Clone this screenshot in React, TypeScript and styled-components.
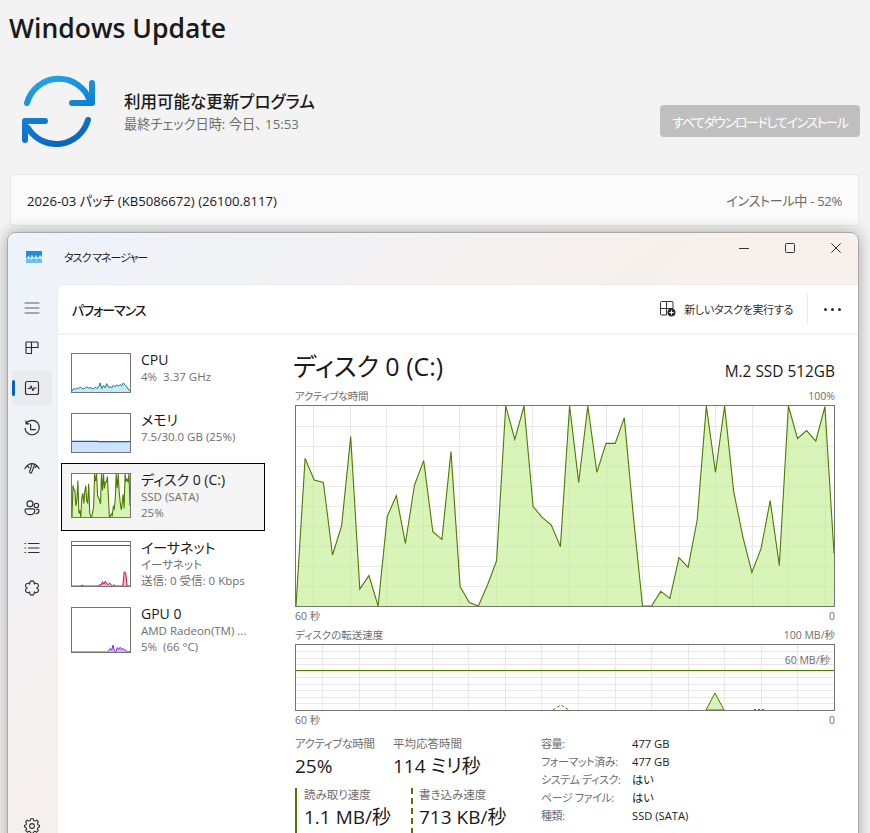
import styled, { createGlobalStyle } from "styled-components";

const FONT = `"Open Sans", "Noto Sans CJK JP", sans-serif`;
const GREEN = "#4e7a00";
const GREEN_FILL = "rgba(185, 235, 125, 0.55)";

const GlobalStyle = createGlobalStyle`
  html, body {
    margin: 0;
    height: 833px;
    overflow: hidden;
    background: #f3f3f3;
  }
  * {
    box-sizing: border-box;
  }
  body {
    font-family: ${FONT};
    font-feature-settings: "palt";
    color: #1a1a1a;
  }
`;

const diskActive = [
  0, 73.8, 63, 61.8, 25.5, 40, 84.7, 8.5, 15.2, 0, 44.7, 55.2, 31.3, 60.5, 72.7, 37.2, 33.3, 77.2,
  9.7, 1.7, 0, 10.5, 22.7, 100, 83.3, 100, 49.7, 44.3, 40.5, 29.7, 100, 61.8, 100, 66.8, 81.3, 81.3,
  94.2, 44.7, 0, 0, 7.3, 3.8, 24.2, 19.3, 43, 100, 66.8, 100, 57.2, 34.7, 16.8, 28.8, 52.7, 20.3,
  100, 83.8, 87.7, 82.5, 99.7, 26.3,
];

const cpuLoad = [
  2, 9, 7, 11, 9, 13, 10, 8, 11, 14, 10, 12, 9, 8, 13, 10, 12, 24, 9, 17, 11, 22, 12, 14, 11, 18, 14,
  19, 15, 20, 16, 24, 18, 14, 8, 2,
];
const memLoad = [28, 28, 28, 28, 28, 28, 28, 28, 28, 27, 27, 27, 27, 27, 27, 27, 27, 27, 27, 27];
const netLoad = [
  0, 0, 0, 0, 0, 0, 0, 2, 0, 0, 0, 0, 0, 0, 0, 0, 0, 0, 0, 3, 2, 10, 4, 11, 5, 3, 7, 2, 0, 3, 0, 0, 0,
  0, 0, 0, 32, 30, 0, 0, 0,
];
const gpuLoad = [
  0, 0, 0, 0, 0, 0, 0, 0, 0, 0, 0, 0, 0, 0, 0, 0, 0, 0, 0, 0, 0, 0, 0, 0, 0, 0, 3, 8, 4, 16, 3, 1, 10,
  6, 11, 6, 8, 5, 4, 0, 0, 2,
];

// turns a percent series into the line and the closed area of a graph
function toPaths(data: number[], w: number, h: number) {
  const pts = data.map((v, i) => `${((i / (data.length - 1)) * w).toFixed(1)},${(h - (v / 100) * h).toFixed(1)}`);
  return { line: "M" + pts.join("L"), area: `M0,${h}L${pts.join("L")}L${w},${h}Z` };
}

const Page = styled.div`
  width: 870px;
  height: 833px;
  overflow: hidden;
  display: flex;
  flex-direction: column;
  > * {
    flex: none;
  }
`;

const Title = styled.h1`
  margin: 10px 0 0 9px;
  height: 36px;
  font-size: 26.5px;
  line-height: 36px;
  font-weight: 600;
`;

const UpdateRow = styled.div`
  display: flex;
  align-items: center;
  height: 76px;
  margin-top: 28px;
  padding-left: 20px;
`;

const UpdateText = styled.div`
  margin: 2px 0 0 28px;
  flex: 1;
`;

const UpdateTitle = styled.div`
  font-size: 16.5px;
  line-height: 22px;
  font-weight: 500;
`;

const UpdateSub = styled.div`
  font-size: 13.2px;
  line-height: 22px;
  color: #6e6e6e;
`;

const InstallButton = styled.button`
  width: 200px;
  height: 32px;
  margin: 18px 10px 0 0;
  padding: 0;
  border: 0;
  border-radius: 4px;
  background: #bfbfbf;
  color: #fff;
  font-family: ${FONT};
  font-feature-settings: "palt";
  font-size: 13px;
  letter-spacing: -1.35px;
`;

const PatchCard = styled.div`
  display: flex;
  align-items: center;
  justify-content: space-between;
  width: 849px;
  height: 52px;
  margin: 24px 0 0 10px;
  padding: 0 16px;
  background: #fbfbfb;
  border: 1px solid #e8e8e8;
  border-radius: 4px;
  font-size: 13.15px;
`;

const PatchStatus = styled.span`
  color: #6b6b6b;
  letter-spacing: -0.35px;
`;

const Window = styled.div`
  display: flex;
  flex-direction: column;
  width: 852px;
  height: 617px;
  margin: 6px 0 0 7px;
  border: 1px solid #a9a9a9;
  border-radius: 8px;
  overflow: hidden;
  background: linear-gradient(135deg, #eef3fb 0%, #f8f0ea 55%, #f8f0ea 100%);
  box-shadow: 0 0 16px rgba(0, 0, 0, 0.32);
`;

const TitleBar = styled.div`
  display: flex;
  align-items: center;
  flex: none;
  height: 51px;
  padding: 0 0 3px 18px;
`;

const WindowName = styled.span`
  margin-left: 22px;
  font-size: 11px;
  letter-spacing: -1px;
`;

const WindowControls = styled.div`
  display: flex;
  align-self: flex-start;
  margin: 0 -1px 0 auto;
  padding-top: 10px;
`;

const ControlButton = styled.div`
  display: flex;
  align-items: center;
  justify-content: center;
  width: 46px;
  height: 10px;
`;

const WindowBody = styled.div`
  display: flex;
  flex: 1;
  min-height: 0;
`;

const Sidebar = styled.nav`
  display: flex;
  flex-direction: column;
  gap: 4px;
  flex: none;
  width: 49px;
  padding: 6px 4px 4px;
`;

const NavItem = styled.div<{ $active?: boolean; $bottom?: boolean }>`
  position: relative;
  display: flex;
  align-items: center;
  justify-content: center;
  width: 40px;
  height: 36px;
  flex: none;
  border-radius: 4px;
  margin-top: ${(p) => (p.$bottom ? "auto" : "0")};
  background: ${(p) => (p.$active ? "#e9ebef" : "transparent")};
  &::before {
    content: "";
    display: ${(p) => (p.$active ? "block" : "none")};
    position: absolute;
    left: 0;
    top: 10px;
    width: 3px;
    height: 16px;
    border-radius: 2px;
    background: #0067c0;
  }
`;

const Main = styled.main`
  display: flex;
  flex-direction: column;
  flex: 1;
  min-width: 0;
  background: #fff;
  border-top: 1px solid #ececec;
  border-left: 1px solid #ececec;
  border-top-left-radius: 8px;
`;

const MainHeader = styled.header`
  display: flex;
  align-items: center;
  flex: none;
  height: 50px;
  padding-left: 14px;
  border-bottom: 2px solid #f3f3f3;
`;

const HeaderTitle = styled.div`
  font-size: 13px;
  font-weight: 500;
  letter-spacing: -1px;
`;

const RunTask = styled.div`
  display: flex;
  align-items: center;
  gap: 8px;
  margin-left: auto;
  font-size: 11px;
  letter-spacing: -0.3px;
  color: #333;
`;

const HeaderDivider = styled.div`
  width: 1px;
  height: 32px;
  margin: 0 16px 0 14px;
  background: #ececec;
`;

const MoreDots = styled.div`
  display: flex;
  gap: 4px;
  margin-right: 17px;
  span {
    width: 3px;
    height: 3px;
    border-radius: 50%;
    background: #2a2a2a;
  }
`;

const Content = styled.div`
  display: flex;
  flex: 1;
  min-height: 0;
`;

const DeviceList = styled.div`
  display: flex;
  flex-direction: column;
  flex: none;
  width: 204px;
  margin: 8px 0 0 3px;
`;

const DeviceItem = styled.div<{ $selected?: boolean; $rows: number }>`
  display: flex;
  gap: 10px;
  height: ${(p) => (p.$selected ? 68 : p.$rows === 3 ? 66 : 60)}px;
  padding: ${(p) => (p.$selected ? "9px 9px" : "10px")};
  border: ${(p) => (p.$selected ? "1.5px solid #000" : "none")};
  background: ${(p) => (p.$selected ? "#f5f5f5" : "transparent")};
`;

const Thumb = styled.svg`
  display: block;
  flex: none;
  width: 60px;
  border: 1px solid #757575;
  background: #fff;
`;

const DeviceText = styled.div`
  min-width: 0;
  margin-top: -3px;
`;

const DeviceName = styled.div`
  font-size: 14px;
  line-height: 19px;
`;

const DeviceSub = styled.div`
  font-size: 11.5px;
  line-height: 16px;
  color: #6e6e6e;
  white-space: pre;
`;

const Detail = styled.section`
  flex: none;
  width: 540px;
  margin-left: 30px;
`;

const DetailHead = styled.div`
  display: flex;
  align-items: flex-end;
  justify-content: space-between;
  height: 55px;
  padding-bottom: 7px;
`;

const DiskName = styled.h2`
  margin: 0 0 0 -2px;
  font-size: 25px;
  line-height: 34px;
  font-weight: 400;
`;

const DiskModel = styled.div`
  font-size: 15.4px;
  line-height: 20px;
  margin-bottom: 1px;
`;

const ChartLabels = styled.div<{ $top?: number }>`
  display: flex;
  justify-content: space-between;
  height: 12px;
  margin-top: ${(p) => p.$top ?? 0}px;
  font-size: 10.5px;
  line-height: 12px;
  color: #6e6e6e;
`;

const TightSpan = styled.span`
  letter-spacing: -0.4px;
`;

const ChartFrame = styled.div<{ $height: number }>`
  position: relative;
  height: ${(p) => p.$height}px;
  margin-top: 3px;
`;

const ChartSvg = styled.svg`
  display: block;
  width: 100%;
  height: 100%;
  border: 1px solid #757575;
`;

const SpeedMark = styled.span`
  position: absolute;
  right: 5px;
  top: 10px;
  font-size: 10.5px;
  line-height: 12px;
  color: #6e6e6e;
`;

const Stats = styled.div`
  display: flex;
  margin-top: 11px;
`;

const StatsLeft = styled.div`
  flex: none;
  width: 246px;
`;

const StatRow = styled.div`
  display: flex;
`;

const Stat = styled.div<{ $width: number }>`
  flex: none;
  width: ${(p) => p.$width}px;
`;

const SpeedStat = styled.div<{ $width: number; $dashed?: boolean }>`
  flex: none;
  width: ${(p) => p.$width}px;
  height: 46px;
  margin-top: 8px;
  padding-left: ${(p) => (p.$dashed ? 6 : 7)}px;
  border-left: 2px ${(p) => (p.$dashed ? "dashed" : "solid")} ${GREEN};
`;

const StatLabel = styled.div<{ $tight?: boolean }>`
  font-size: 11.5px;
  line-height: 14px;
  letter-spacing: ${(p) => (p.$tight ? "-0.5px" : "0")};
  color: #6e6e6e;
`;

const StatValue = styled.div`
  margin-top: 1px;
  font-size: 19px;
  line-height: 28px;
  white-space: nowrap;
`;

const InfoTable = styled.dl`
  display: grid;
  grid-template-columns: 91px auto;
  grid-auto-rows: 18px;
  align-content: start;
  margin: -2px 0 0;
  line-height: 18px;
`;

const InfoKey = styled.dt`
  font-size: 11px;
  letter-spacing: -0.4px;
  color: #6e6e6e;
  white-space: nowrap;
`;

const InfoValue = styled.dd`
  margin: 0;
  font-size: 11.2px;
`;

function SyncIcon() {
  return (
    <svg width="76" height="76" viewBox="0 0 76 76" fill="none" strokeWidth="6" strokeLinecap="round" strokeLinejoin="round">
      <defs>
        <linearGradient id="syncTop" x1="0" y1="0" x2="1" y2="1">
          <stop offset="0" stopColor="#28a6ea" />
          <stop offset="1" stopColor="#0f80d8" />
        </linearGradient>
        <linearGradient id="syncBottom" x1="0" y1="0" x2="1" y2="1">
          <stop offset="0" stopColor="#0f80d8" />
          <stop offset="1" stopColor="#0a62b5" />
        </linearGradient>
      </defs>
      <path d="M7 29A33 33 0 0 1 70 27M52 29H72V9" stroke="url(#syncTop)" />
      <path d="M68 46A33 33 0 0 1 8 54M25 47H5V66" stroke="url(#syncBottom)" />
    </svg>
  );
}

function AppLogo() {
  return (
    <svg width="16" height="12" viewBox="0 0 16 12">
      <rect width="16" height="12" fill="#1c8fdc" />
      <path d="M0 8L2.5 4.5L4 7L6 3.5L8 7L10 4L12 7L14 4L16 6V9L13 8L11 9L8 8L5 9L2 8L0 9Z" fill="#bfe6fb" />
      <rect y="9" width="16" height="3" fill="#6cc1ef" />
    </svg>
  );
}

const strokeIcon = {
  width: 18,
  height: 18,
  viewBox: "0 0 18 18",
  fill: "none",
  stroke: "#2c2c2c",
  strokeWidth: 1.15,
  strokeLinecap: "round" as const,
  strokeLinejoin: "round" as const,
};

const navIcons = [
  <path key="m" d="M2 4H16M2 9H16M2 14H16" stroke="#5a5a5a" />,
  <path key="a" d="M3.5 3H8.5V8.5H3V3.5A.5.5 0 0 1 3.5 3ZM8.5 3H14A1 1 0 0 1 15 4V8.5H8.5ZM3 8.5H8.5V14.5H4A1 1 0 0 1 3 13.5Z" />,
  <g key="p">
    <rect x="2.5" y="2.5" width="13" height="13" rx="2" />
    <path d="M5 9.5H6.8L8 7L9.8 11.5L11 9H13" />
  </g>,
  <g key="h">
    <path d="M3.4 4.2A7.2 7.2 0 1 1 2 9.2M3 1.8V4.8H6" />
    <path d="M7.6 5.2V10.6H12.4" />
  </g>,
  <g key="s">
    <path d="M4.2 6.6A7 7 0 0 1 13.8 6.6M1.8 9.6L4.2 6.6L6 8.6M16.2 9.6L13.8 6.6L12 8.6" />
    <path d="M11.6 5.4L8.6 13.6A1.1 1.1 0 0 1 6.6 12.9L8.9 5.2" />
  </g>,
  <g key="u">
    <circle cx="7" cy="4.8" r="3" />
    <path d="M2 11.4A1.6 1.6 0 0 1 3.6 9.8H10.2A1.6 1.6 0 0 1 11.8 11.4C11.8 14 9.6 15.6 7 15.6S2 14 2 11.4Z" />
    <circle cx="13.4" cy="6.4" r="2.2" />
    <path d="M13.6 10.4H14.6A1.4 1.4 0 0 1 16 11.8C16 13.6 14.8 14.6 13 14.6" />
  </g>,
  <path key="d" d="M2 4.5H2.6M2 9H2.6M2 13.5H2.6M5.5 4.5H16M5.5 9H16M5.5 13.5H16" />,
  <path key="c" d="M13.6 9A2.4 2.4 0 1 1 11.3 12.98A2.4 2.4 0 1 1 6.7 12.98A2.4 2.4 0 1 1 4.4 9A2.4 2.4 0 1 1 6.7 5.02A2.4 2.4 0 1 1 11.3 5.02A2.4 2.4 0 1 1 13.6 9Z" />,
];

const GEAR =
  "M7.6 1.8H10.4L10.8 3.8L12.4 4.5L14.1 3.4L16 5.4L14.9 7L15.5 8.7L17.2 9V11L15.5 11.4L14.9 13L16 14.6L14.1 16.6L12.4 15.5L10.8 16.2L10.4 17.8H7.6L7.2 16.2L5.6 15.5L3.9 16.6L2 14.6L3.1 13L2.5 11.4L.8 11V9L2.5 8.7L3.1 7L2 5.4L3.9 3.4L5.6 4.5L7.2 3.8Z";

const devices = [
  { name: "CPU", sub: ["4%  3.37 GHz"], h: 40, data: cpuLoad, line: "#117d9c", fill: "#c8e9f4", width: 1 },
  { name: "メモリ", sub: ["7.5/30.0 GB (25%)"], h: 40, data: memLoad, line: "#0a5fc4", fill: "#cfe2fb", width: 1.2 },
  { name: "ディスク 0 (C:)", sub: ["SSD (SATA)", "25%"], h: 45, data: diskActive, line: GREEN, fill: "#d8f3b4", width: 1.1, selected: true },
  { name: "イーサネット", sub: ["イーサネット", "送信: 0 受信: 0 Kbps"], h: 46, data: netLoad, line: "#c2185b", fill: "#eeb4cc", width: 1, topLine: "#c2185b" },
  { name: "GPU 0", sub: ["AMD Radeon(TM) ...", "5%  (66 °C)"], h: 46, data: gpuLoad, line: "#8a2be2", fill: "#d4b3f5", width: 1 },
];

const vGrid = (start: number) => Array.from({ length: 15 }, (_, i) => start + i * 36.57);

function Grid({ w, h, rows, start }: { w: number; h: number; rows: number; start: number }) {
  const step = h / rows;
  return (
    <g stroke="#e8e8e8" strokeWidth="1" shapeRendering="crispEdges">
      {Array.from({ length: rows - 1 }, (_, i) => (
        <line key={i} x1="0" x2={w} y1={(i + 1) * step} y2={(i + 1) * step} />
      ))}
      {vGrid(start).map((x) => (
        <line key={x} x1={x} x2={x} y1="0" y2={h} />
      ))}
    </g>
  );
}

function ActiveChart() {
  const w = 538;
  const h = 200;
  const { line, area } = toPaths(diskActive, w, h);
  return (
    <ChartSvg viewBox={`0 0 ${w} ${h}`}>
      <Grid w={w} h={h} rows={10} start={17.5} />
      <path d={area} fill={GREEN_FILL} />
      <path d={line} fill="none" stroke={GREEN} strokeWidth="1.1" />
    </ChartSvg>
  );
}

function TransferChart() {
  const w = 538;
  const h = 65;
  return (
    <ChartSvg viewBox={`0 0 ${w} ${h}`}>
      <Grid w={w} h={h} rows={10} start={26.5} />
      <path d={`M0 25.5H${w}`} stroke={GREEN} strokeWidth="1.2" fill="none" />
      <path d="M410 65L419 48L428 65Z" fill={GREEN_FILL} stroke={GREEN} strokeWidth="1" />
      <path d="M257 65L265 60L273 65" fill="none" stroke={GREEN} strokeWidth="1" strokeDasharray="3 2" />
      <path d="M458 64.5H470" fill="none" stroke={GREEN} strokeWidth="1" strokeDasharray="2 2" />
    </ChartSvg>
  );
}

function DeviceThumb({ d }: { d: (typeof devices)[number] }) {
  const w = 58;
  const h = d.h - 2;
  const { line, area } = toPaths(d.data, w, h);
  return (
    <Thumb viewBox={`0 0 ${w} ${h}`} height={d.h} style={{ height: d.h }}>
      <path d={area} fill={d.fill} />
      <path d={line} fill="none" stroke={d.line} strokeWidth={d.width} />
      {d.topLine && <path d={`M0 3.5H${w}`} stroke={d.topLine} strokeWidth="1" />}
    </Thumb>
  );
}

export default function App() {
  return (
    <Page>
      <GlobalStyle />
      <Title>Windows Update</Title>
      <UpdateRow>
        <SyncIcon />
        <UpdateText>
          <UpdateTitle>利用可能な更新プログラム</UpdateTitle>
          <UpdateSub>最終チェック日時: 今日、 15:53</UpdateSub>
        </UpdateText>
        <InstallButton>すべてダウンロードしてインストール</InstallButton>
      </UpdateRow>
      <PatchCard>
        <span>2026-03 パッチ (KB5086672) (26100.8117)</span>
        <PatchStatus>インストール中 - 52%</PatchStatus>
      </PatchCard>

      <Window>
        <TitleBar>
          <AppLogo />
          <WindowName>タスク マネージャー</WindowName>
          <WindowControls>
            <ControlButton>
              <svg width="10" height="10" viewBox="0 0 10 10" fill="none" stroke="#333">
                <path d="M0 5.5H10" />
              </svg>
            </ControlButton>
            <ControlButton>
              <svg width="10" height="10" viewBox="0 0 10 10" fill="none" stroke="#333">
                <rect x=".5" y=".5" width="9" height="9" rx="1" />
              </svg>
            </ControlButton>
            <ControlButton>
              <svg width="10" height="10" viewBox="0 0 10 10" fill="none" stroke="#333">
                <path d="M.3 .3L9.7 9.7M9.7 .3L.3 9.7" />
              </svg>
            </ControlButton>
          </WindowControls>
        </TitleBar>
        <WindowBody>
          <Sidebar>
            {navIcons.map((icon, i) => (
              <NavItem key={i} $active={i === 2}>
                <svg {...strokeIcon}>{icon}</svg>
              </NavItem>
            ))}
            <NavItem $bottom>
              <svg {...strokeIcon} viewBox="0 0 18 19.6">
                <path d={GEAR} />
                <circle cx="9" cy="9.8" r="2.6" />
              </svg>
            </NavItem>
          </Sidebar>
          <Main>
            <MainHeader>
              <HeaderTitle>パフォーマンス</HeaderTitle>
              <RunTask>
                <svg width="16" height="16" viewBox="0 0 16 16" fill="none" stroke="#333" strokeWidth="1">
                  <path d="M1.5 .5H6.5V7.5H.5V1.5A1 1 0 0 1 1.5 .5ZM6.5 .5H12A1 1 0 0 1 13 1.5V7.5H6.5ZM.5 7.5H6.5V14H1.5A1 1 0 0 1 .5 13Z" />
                  <circle cx="11.5" cy="11.5" r="4" fill="#2a2a2a" stroke="none" />
                  <path d="M11.5 9.3V13.7M9.3 11.5H13.7" stroke="#fff" />
                </svg>
                新しいタスクを実行する
              </RunTask>
              <HeaderDivider />
              <MoreDots>
                <span />
                <span />
                <span />
              </MoreDots>
            </MainHeader>
            <Content>
              <DeviceList>
                {devices.map((d) => (
                  <DeviceItem key={d.name} $selected={d.selected} $rows={d.sub.length + 1}>
                    <DeviceThumb d={d} />
                    <DeviceText>
                      <DeviceName>{d.name}</DeviceName>
                      {d.sub.map((s) => (
                        <DeviceSub key={s}>{s}</DeviceSub>
                      ))}
                    </DeviceText>
                  </DeviceItem>
                ))}
              </DeviceList>
              <Detail>
                <DetailHead>
                  <DiskName>ディスク 0 (C:)</DiskName>
                  <DiskModel>M.2 SSD 512GB</DiskModel>
                </DetailHead>
                <ChartLabels>
                  <TightSpan>アクティブな時間</TightSpan>
                  <span>100%</span>
                </ChartLabels>
                <ChartFrame $height={202}>
                  <ActiveChart />
                </ChartFrame>
                <ChartLabels $top={3}>
                  <span>60 秒</span>
                  <span>0</span>
                </ChartLabels>
                <ChartLabels $top={7}>
                  <span>ディスクの転送速度</span>
                  <span>100 MB/秒</span>
                </ChartLabels>
                <ChartFrame $height={67}>
                  <TransferChart />
                  <SpeedMark>60 MB/秒</SpeedMark>
                </ChartFrame>
                <ChartLabels $top={3}>
                  <span>60 秒</span>
                  <span>0</span>
                </ChartLabels>
                <Stats>
                  <StatsLeft>
                    <StatRow>
                      <Stat $width={98}>
                        <StatLabel $tight>アクティブな時間</StatLabel>
                        <StatValue>25%</StatValue>
                      </Stat>
                      <Stat $width={148}>
                        <StatLabel>平均応答時間</StatLabel>
                        <StatValue>114 ミリ秒</StatValue>
                      </Stat>
                    </StatRow>
                    <StatRow>
                      <SpeedStat $width={116}>
                        <StatLabel>読み取り速度</StatLabel>
                        <StatValue>1.1 MB/秒</StatValue>
                      </SpeedStat>
                      <SpeedStat $width={130} $dashed>
                        <StatLabel>書き込み速度</StatLabel>
                        <StatValue>713 KB/秒</StatValue>
                      </SpeedStat>
                    </StatRow>
                  </StatsLeft>
                  <InfoTable>
                    <InfoKey>容量:</InfoKey>
                    <InfoValue>477 GB</InfoValue>
                    <InfoKey>フォーマット済み:</InfoKey>
                    <InfoValue>477 GB</InfoValue>
                    <InfoKey>システム ディスク:</InfoKey>
                    <InfoValue>はい</InfoValue>
                    <InfoKey>ページ ファイル:</InfoKey>
                    <InfoValue>はい</InfoValue>
                    <InfoKey>種類:</InfoKey>
                    <InfoValue>SSD (SATA)</InfoValue>
                  </InfoTable>
                </Stats>
              </Detail>
            </Content>
          </Main>
        </WindowBody>
      </Window>
    </Page>
  );
}
